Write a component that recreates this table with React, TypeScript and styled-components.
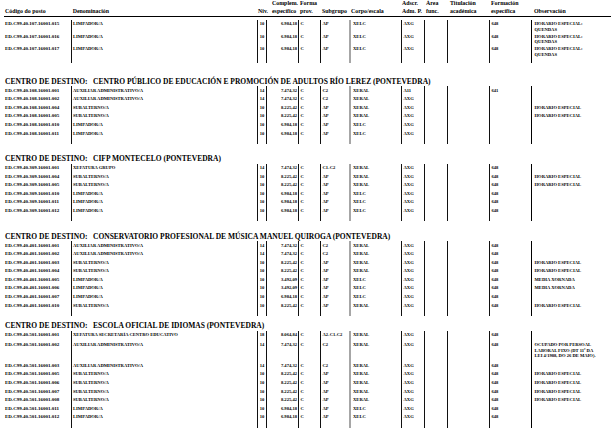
import styled, { createGlobalStyle } from "styled-components";

const GlobalStyle = createGlobalStyle`
  html, body {
    margin: 0;
    padding: 0;
    background: #fff;
  }
  body {
    font-family: "Liberation Serif", "Times New Roman", serif;
    color: #000;
  }
`;

// anchos das columnas, en px, iguais para a cabeceira e o corpo
const COLS = "67px 186px 9px 32px 22px 29px 52px 23px 23px 42px 42px 80px";

type Line = "none" | "thin" | "grey" | "heavy";
type Align = "left" | "center" | "right";

interface ColDef {
  line: Line;
  align: Align;
  pad: number;
}

const columns: ColDef[] = [
  { line: "none", align: "left", pad: 1 }, // código
  { line: "thin", align: "left", pad: 1 }, // denominación
  { line: "thin", align: "center", pad: 0 }, // nivel
  { line: "thin", align: "right", pad: 1 }, // complemento
  { line: "thin", align: "left", pad: 1.5 }, // forma prov.
  { line: "thin", align: "left", pad: 1.5 }, // subgrupo
  { line: "grey", align: "left", pad: 2 }, // corpo/escala
  { line: "thin", align: "left", pad: 1.5 }, // adscr.
  { line: "thin", align: "left", pad: 1.5 }, // área
  { line: "thin", align: "left", pad: 1.5 }, // titulación
  { line: "thin", align: "left", pad: 1.5 }, // formación
  { line: "heavy", align: "left", pad: 2.5 }, // observación
];

const lineStyle: Record<Line, string> = {
  none: "none",
  thin: "1px solid #111",
  grey: "2px solid #a6a6a6",
  heavy: "1.5px solid #000",
};

const Page = styled.div`
  width: 616px;
  padding: 0 4px;
  box-sizing: border-box;
`;

const HeaderRow = styled.div`
  display: grid;
  grid-template-columns: ${COLS};
  align-items: end;
  height: 15.6px;
  border-bottom: 1px solid #000;
  width: 607px;
`;

const HeadCell = styled.div<{ $pad: number }>`
  padding-left: ${(p) => p.$pad}px;
  font-size: 5.9px;
  font-weight: bold;
  line-height: 7.8px;
  white-space: nowrap;
`;

const Section = styled.section<{ $gap: number }>`
  margin-top: ${(p) => p.$gap}px;
`;

const SectionTitle = styled.h2`
  margin: 0;
  padding-left: 1px;
  height: 9px;
  font-size: 7.5px;
  line-height: 9px;
  font-weight: bold;
  white-space: nowrap;
`;

const TitleLabel = styled.span`
  display: inline-block;
  width: 88px;
`;

const Body = styled.div<{ $top: number }>`
  padding-top: ${(p) => p.$top}px;
`;

const Row = styled.div<{ $h: number }>`
  display: grid;
  grid-template-columns: ${COLS};
  min-height: ${(p) => p.$h}px;
`;

const Cell = styled.div<{ $line: Line; $align: Align; $pad: number; $code?: boolean }>`
  border-left: ${(p) => lineStyle[p.$line]};
  text-align: ${(p) => p.$align};
  padding: 1.2px ${(p) => (p.$align === "right" ? p.$pad : 0)}px 0
    ${(p) => (p.$align === "left" ? p.$pad : 0)}px;
  font-size: ${(p) => (p.$code ? 5 : 4.6)}px;
  font-weight: bold;
  line-height: 5.6px;
  white-space: pre;
  overflow: visible;
`;

interface Post {
  code: string;
  name: string;
  level: string;
  amount: string;
  group: string;
  corps: string;
  adscr?: string;
  training?: string;
  note?: string;
  h?: number;
}

interface Centre {
  title?: string;
  gap: number;
  prefix: string;
  posts: Post[];
}

const limpador = (code: string, note?: string, amount = "6.984,18"): Post => ({
  code,
  name: "LIMPADOR/A",
  level: "10",
  amount,
  group: "AP",
  corps: "XELC",
  training: "648",
  note,
});

const subalterno = (code: string, training?: string): Post => ({
  code,
  name: "SUBALTERNO/A",
  level: "10",
  amount: "8.225,42",
  group: "AP",
  corps: "XERAL",
  training,
  note: "HORARIO ESPECIAL",
});

const auxiliar = (code: string, training?: string, note?: string, h?: number): Post => ({
  code,
  name: "AUXILIAR ADMINISTRATIVO/A",
  level: "14",
  amount: "7.474,32",
  group: "C2",
  corps: "XERAL",
  training,
  note,
  h,
});

const centres: Centre[] = [
  {
    gap: 0,
    prefix: "ED.C99.40.107.16001.",
    posts: [
      limpador("015", "HORARIO ESPECIAL:\nQUENDAS"),
      limpador("016", "HORARIO ESPECIAL:\nQUENDAS"),
      limpador("017", "HORARIO ESPECIAL:\nQUENDAS"),
    ],
  },
  {
    title: "CENTRO PÚBLICO DE EDUCACIÓN E PROMOCIÓN DE ADULTOS RÍO LEREZ (PONTEVEDRA)",
    gap: 13.7,
    prefix: "ED.C99.40.108.16001.",
    posts: [
      { ...auxiliar("001", "641"), adscr: "A11" },
      auxiliar("002"),
      subalterno("004"),
      subalterno("005"),
      { ...limpador("010"), training: undefined },
      { ...limpador("011"), training: undefined },
    ],
  },
  {
    title: "CIFP MONTECELO (PONTEVEDRA)",
    gap: 10.4,
    prefix: "ED.C99.40.309.16001.",
    posts: [
      { ...auxiliar("001", "648"), name: "XEFATURA GRUPO", group: "C1-C2" },
      subalterno("004", "648"),
      subalterno("005", "648"),
      limpador("010"),
      limpador("011"),
      limpador("012"),
    ],
  },
  {
    title: "CONSERVATORIO PROFESIONAL DE MÚSICA MANUEL QUIROGA (PONTEVEDRA)",
    gap: 10.4,
    prefix: "ED.C99.40.401.16001.",
    posts: [
      auxiliar("001", "648"),
      auxiliar("002", "648"),
      subalterno("003", "648"),
      subalterno("004", "648"),
      limpador("005", "MEDIA XORNADA", "3.492,09"),
      limpador("006", "MEDIA XORNADA", "3.492,09"),
      limpador("007"),
      subalterno("010", "648"),
    ],
  },
  {
    title: "ESCOLA OFICIAL DE IDIOMAS (PONTEVEDRA)",
    gap: 5,
    prefix: "ED.C99.40.501.16001.",
    posts: [
      {
        code: "001",
        name: "XEFATURA SECRETARÍA CENTRO EDUCATIVO",
        level: "18",
        amount: "8.064,84",
        group: "A2-C1-C2",
        corps: "XERAL",
        training: "648",
        h: 10.5,
      },
      auxiliar(
        "002",
        "648",
        "OCUPADO POR PERSOAL\nLABORAL FIXO (DT 11ª DA\nLEI 4/1988, DO 26 DE MAIO).",
        20.5
      ),
      auxiliar("003", "648"),
      subalterno("005", "648"),
      subalterno("006", "648"),
      subalterno("007", "648"),
      subalterno("008", "648"),
      limpador("011"),
      limpador("012"),
    ],
  },
];

const headers: string[] = [
  "Código do posto",
  "Denominación",
  "Niv.",
  "Complem.\nespecífico",
  "Forma\nprov.",
  "Subgrupo",
  "Corpo/escala",
  "Adscr.\nAdm. P.",
  "Área\nfunc.",
  "Titulación\nacadémica",
  "Formación\nespecífica",
  "Observación",
];

const headPad = [1, 1.7, 1, 6, 2, 2, 2, 1, 2, 3, 2, 3];

const PostRow = ({ prefix, post }: { prefix: string; post: Post }) => {
  const values = [
    prefix + post.code,
    post.name,
    post.level,
    post.amount,
    "C",
    post.group,
    post.corps,
    post.adscr ?? "AXG",
    "",
    "",
    post.training ?? "",
    post.note ?? "",
  ];
  return (
    <Row $h={post.h ?? 8.6}>
      {values.map((v, i) => (
        <Cell key={i} $line={columns[i].line} $align={columns[i].align} $pad={columns[i].pad} $code={i === 0}>
          {v}
        </Cell>
      ))}
    </Row>
  );
};

const FillerRow = () => (
  <Row $h={6}>
    {columns.map((c, i) => (
      <Cell key={i} $line={c.line} $align={c.align} $pad={c.pad} />
    ))}
  </Row>
);

export default function App() {
  return (
    <>
      <GlobalStyle />
      <Page>
        <HeaderRow>
          {headers.map((h, i) => (
            <HeadCell key={i} $pad={headPad[i]} style={{ whiteSpace: "pre" }}>
              {h}
            </HeadCell>
          ))}
        </HeaderRow>

        {centres.map((c, ci) => (
          <Section key={ci} $gap={c.gap}>
            {c.title && (
              <SectionTitle>
                <TitleLabel>CENTRO DE DESTINO:</TitleLabel>
                {c.title}
              </SectionTitle>
            )}
            <Body $top={c.title ? 0.5 : 3.5}>
              {c.posts.map((p) => (
                <PostRow key={p.code} prefix={c.prefix} post={p} />
              ))}
              <FillerRow />
            </Body>
          </Section>
        ))}
      </Page>
    </>
  );
}
